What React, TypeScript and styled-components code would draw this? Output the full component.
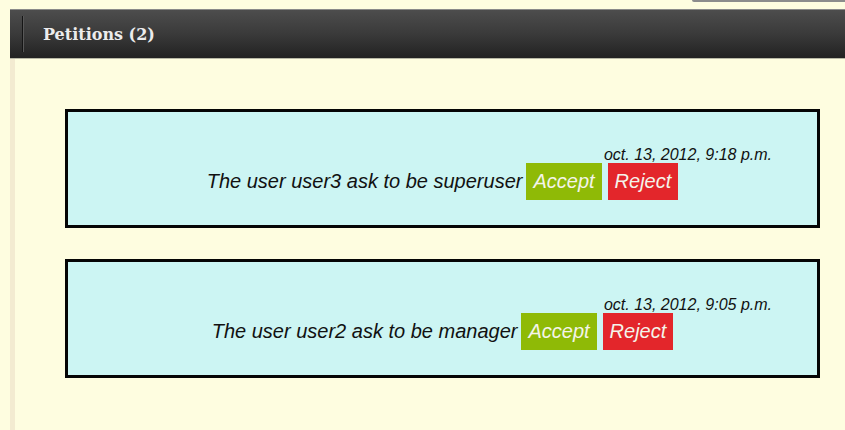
import React from 'react';
import styled, { createGlobalStyle } from 'styled-components';

const GlobalStyle = createGlobalStyle`
    html, body {
        margin: 0;
        padding: 0;
        background: #fefde0;
    }
    body {
        font-family: "Liberation Sans", Arial, sans-serif;
    }
`

const TopStrip = styled.div`
    height: 9px;
    display: flex;
    justify-content: flex-end;

    .strip__tab {
        width: 153px;
        height: 2px;
        background: #8c8c8c;
        border-bottom-left-radius: 2px;
    }
`

const Main = styled.div`
    margin-left: 10px;
`

const Header = styled.div`
    height: 50px;
    box-sizing: border-box;
    display: flex;
    align-items: center;
    background: linear-gradient(to bottom, #4d4d4d 0%, #3a3a3a 50%, #222222 100%);
    border-top: 1px solid #8a8a8a;
    border-bottom: 1px solid #b9b9a6;

    .header__sep {
        width: 1px;
        height: 36px;
        margin-left: 12px;
        background: #151515;
        border-right: 1px solid #585858;
    }

    .header__title {
        margin: 0 0 0 19px;
        font-family: "DejaVu Serif", serif;
        font-size: 16px;
        font-weight: 700;
        color: #ececec;
    }
`

const Content = styled.div`
    border-left: 5px solid #f3ebd1;
    min-height: 371px;
    box-sizing: border-box;
    padding: 50px 25px 20px 50px;
    display: flex;
    flex-direction: column;
    gap: 31px;
`

const Card = styled.div`
    height: 119px;
    box-sizing: border-box;
    border: 3px solid #050505;
    background: #ccf5f3;
    padding: 34px 45px 0;
    font-style: italic;
    color: #111;

    .card__date {
        text-align: right;
        font-size: 16px;
        line-height: 17px;
    }

    .card__row {
        display: flex;
        justify-content: center;
        align-items: center;
        gap: 4px;
        font-size: 20px;
    }
`

const ActionButton = styled.span<{ $kind: 'accept' | 'reject' }>`
    display: inline-flex;
    align-items: center;
    height: 37px;
    padding: 0 7px;
    font-size: 20px;
    color: #f4f4ea;
    background: ${p => (p.$kind === 'accept' ? '#8fba06' : '#e3262b')};
    margin-left: ${p => (p.$kind === 'accept' ? '0' : '2px')};
`

const petitions = [
  { user: 'user3', role: 'superuser', date: 'oct. 13, 2012, 9:18 p.m.' },
  { user: 'user2', role: 'manager', date: 'oct. 13, 2012, 9:05 p.m.' },
];

const App = () => {
  return (
    <>
      <GlobalStyle />
      <TopStrip>
        <div className="strip__tab" />
      </TopStrip>
      <Main>
        <Header>
          <span className="header__sep" />
          <h1 className="header__title">Petitions ({petitions.length})</h1>
        </Header>
        <Content>
          {petitions.map(p => (
            <Card key={p.user}>
              <div className="card__date">{p.date}</div>
              <div className="card__row">
                <span>The user {p.user} ask to be {p.role}</span>
                <ActionButton $kind="accept">Accept</ActionButton>
                <ActionButton $kind="reject">Reject</ActionButton>
              </div>
            </Card>
          ))}
        </Content>
      </Main>
    </>
  );
}

export default App;
